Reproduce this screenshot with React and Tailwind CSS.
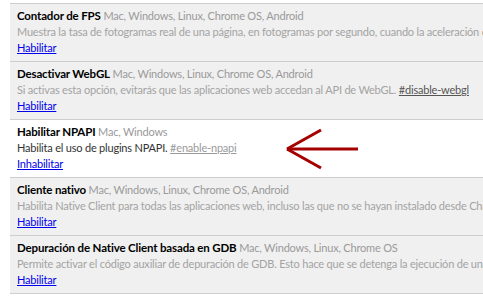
import React from 'react';

// Experimentos (chrome://flags) — lista de funciones
const FLAGS = [
  {
    title: 'Contador de FPS',
    platforms: 'Mac, Windows, Linux, Chrome OS, Android',
    desc: 'Muestra la tasa de fotogramas real de una página, en fotogramas por segundo, cuando la aceleración de hardware está activa.',
    action: 'Habilitar',
  },
  {
    title: 'Desactivar WebGL',
    platforms: 'Mac, Windows, Linux, Chrome OS, Android',
    desc: 'Si activas esta opción, evitarás que las aplicaciones web accedan al API de WebGL.',
    tag: '#disable-webgl',
    action: 'Habilitar',
  },
  {
    title: 'Habilitar NPAPI',
    platforms: 'Mac, Windows',
    desc: 'Habilita el uso de plugins NPAPI.',
    tag: '#enable-npapi',
    action: 'Inhabilitar',
    enabled: true,
  },
  {
    title: 'Cliente nativo',
    platforms: 'Mac, Windows, Linux, Chrome OS, Android',
    desc: 'Habilita Native Client para todas las aplicaciones web, incluso las que no se hayan instalado desde Chrome Web Store.',
    action: 'Habilitar',
  },
  {
    title: 'Depuración de Native Client basada en GDB',
    platforms: 'Mac, Windows, Linux, Chrome OS',
    desc: 'Permite activar el código auxiliar de depuración de GDB. Esto hace que se detenga la ejecución de una aplicación.',
    action: 'Habilitar',
  },
];

function Arrow() {
  return (
    <svg className="absolute left-[269px] top-[6px]" width="84" height="46" viewBox="0 0 84 46">
      <g stroke="#a50000" strokeWidth="3" fill="none" strokeLinecap="butt">
        <path d="M8 23 H79" />
        <path d="M8 23 L42 4" />
        <path d="M8 23 L42 42" />
      </g>
    </svg>
  );
}

function FlagRow({ flag }) {
  return (
    <div
      className={
        'relative border-b border-[#cdcdcd] pl-[7px] pt-1 pb-[5px] leading-4 whitespace-nowrap overflow-hidden ' +
        (flag.enabled ? 'bg-white' : 'bg-[#f0f0f0]')
      }
    >
      <div>
        <span className="font-bold text-black text-[11.5px] tracking-[-0.15px]">{flag.title}</span>{' '}
        <span className="text-[#9a9a9a]">{flag.platforms}</span>
      </div>
      <div className={flag.enabled ? 'text-[#333]' : 'text-[#a3a3a3]'}>
        {flag.desc}
        {flag.tag && (
          <>
            {' '}
            <span className={'underline ' + (flag.enabled ? 'text-[#9a9a9a]' : 'text-[#555]')}>{flag.tag}</span>
          </>
        )}
      </div>
      <div>
        <span className="text-[#0000ee] underline">{flag.action}</span>
      </div>
      {flag.enabled && <Arrow />}
    </div>
  );
}

export default function App() {
  return (
    <div className="w-[483px] h-[300px] bg-white overflow-hidden pt-[3px] pl-[10px] text-[11px] tracking-[-0.2px] font-['Lato','Noto_Sans',sans-serif]">
      <div className="border-t border-[#cdcdcd]">
        {FLAGS.map((f) => (
          <FlagRow key={f.title} flag={f} />
        ))}
      </div>
    </div>
  );
}
